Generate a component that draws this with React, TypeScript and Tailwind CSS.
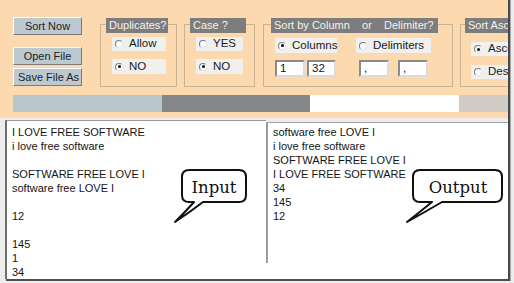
import React from 'react';

const inputLines = [
  'I LOVE FREE SOFTWARE',
  'i love free software',
  '',
  'SOFTWARE FREE LOVE I',
  'software free LOVE I',
  '',
  '12',
  '',
  '145',
  '1',
  '34',
];

const outputLines = [
  'software free LOVE I',
  'i love free software',
  'SOFTWARE FREE LOVE I',
  'I LOVE FREE SOFTWARE',
  '34',
  '145',
  '12',
];

function Radio({ checked }: { checked?: boolean }) {
  return (
    <span className="flex h-[8px] w-[8px] shrink-0 items-center justify-center rounded-full border border-t-[#7c7c7c] border-l-[#7c7c7c] border-r-[#e4e4e4] border-b-[#e4e4e4] bg-white">
      {checked && <span className="h-[3px] w-[3px] rounded-full bg-black" />}
    </span>
  );
}

function Option({ label, checked, className }: { label: string; checked?: boolean; className: string }) {
  return (
    <div className={`flex shrink-0 items-center bg-[#f0f0ef] pl-[3px] text-[11.5px] leading-none text-[#1a1a1a] ${className}`}>
      <Radio checked={checked} />
      <span className="ml-[6px]">{label}</span>
    </div>
  );
}

function Title({ children, className }: { children: React.ReactNode; className: string }) {
  return (
    <div className={`-mt-[7px] h-[15px] shrink-0 overflow-hidden whitespace-pre bg-[#7d7d7d] pl-[3px] text-[11px] leading-[15px] text-[#f2f2f2] ${className}`}>
      {children}
    </div>
  );
}

function Btn({ label, className }: { label: string; className: string }) {
  return (
    <div className={`flex w-[69px] items-center justify-center overflow-hidden whitespace-nowrap border border-t-white border-l-white border-r-[#7b7b7b] border-b-[#7b7b7b] bg-[#bdc9d1] text-[11px] text-[#1e1e1e] ${className}`}>
      {label}
    </div>
  );
}

function Field({ value, className }: { value: string; className: string }) {
  return (
    <div className={`flex h-[17px] shrink-0 items-end border-2 border-t-[#8a8a8a] border-l-[#8a8a8a] border-r-[#dcdcdc] border-b-[#dcdcdc] bg-white pl-[3px] text-[11.5px] leading-[14px] text-[#111] ${className}`}>
      {value}
    </div>
  );
}

export default function App() {
  return (
    <div className="relative h-[283px] w-[514px] overflow-hidden bg-[#ededed] font-['Liberation_Sans',Arial,sans-serif]">
      <div className="flex h-[281px]">
        <div className="flex w-[508px] flex-col">
          {/* toolbar */}
          <div className="flex h-[118px] shrink-0 flex-col overflow-hidden bg-[#fdd9b0]">
            <div className="flex h-[95px] shrink-0 items-start">
              <div className="ml-[13px] flex shrink-0 flex-col pt-[17px]">
                <Btn label="Sort Now" className="h-[18px]" />
                <Btn label="Open File" className="mt-[12px] h-[18px]" />
                <Btn label="Save File As" className="mt-[3px] h-[18px] pl-[2px]" />
              </div>

              <div className="ml-[18px] mt-[24px] flex h-[63px] w-[77px] shrink-0 flex-col border border-[#c9b496]">
                <Title className="ml-[5px] w-[62px]">Duplicates?</Title>
                <Option label="Allow" className="ml-[11px] mt-[4px] h-[14px] w-[54px]" />
                <Option label="NO" checked className="ml-[11px] mt-[8px] h-[15px] w-[54px]" />
              </div>

              <div className="ml-[7px] mt-[24px] flex h-[63px] w-[71px] shrink-0 flex-col border border-[#c9b496]">
                <Title className="ml-[5px] w-[56px]">Case ?</Title>
                <Option label="YES" className="ml-[11px] mt-[4px] h-[14px] w-[47px]" />
                <Option label="NO" checked className="ml-[11px] mt-[8px] h-[15px] w-[47px]" />
              </div>

              <div className="ml-[8px] mt-[24px] flex h-[63px] w-[190px] shrink-0 flex-col border border-[#c9b496]">
                <Title className="ml-[7px] w-[167px]">{'Sort by Column    or    Delimiter?'}</Title>
                <div className="mt-[5px] flex">
                  <Option label="Columns" checked className="ml-[11px] h-[15px] w-[62px]" />
                  <Option label="Delimiters" className="ml-[19px] h-[15px] w-[75px]" />
                </div>
                <div className="mt-[7px] flex">
                  <Field value="1" className="ml-[11px] w-[30px]" />
                  <Field value="32" className="ml-[2px] w-[29px]" />
                  <Field value="," className="ml-[23px] w-[30px]" />
                  <Field value="," className="ml-[9px] w-[30px]" />
                </div>
              </div>

              <div className="ml-[7px] mt-[24px] flex h-[63px] w-[100px] shrink-0 flex-col border border-[#c9b496]">
                <Title className="ml-[4px] w-[90px]">Sort Ascending?</Title>
                <Option label="Ascending" checked className="ml-[10px] mt-[9px] h-[14px] w-[80px]" />
                <Option label="Descending" className="ml-[10px] mt-[9px] h-[14px] w-[80px]" />
              </div>
            </div>

            <div className="ml-[13px] flex h-[17px] shrink-0">
              <div className="w-[149px] bg-[#b9c5cd]" />
              <div className="w-[148px] bg-[#858789]" />
              <div className="w-[149px] bg-white" />
              <div className="w-[49px] bg-[#d2ccc6]" />
            </div>
          </div>

          {/* text panes */}
          <div className="flex h-[161px] shrink-0 items-start">
            <div className="ml-[5px] mt-[2px] h-[159px] w-[261px] shrink-0 border-l-2 border-t border-l-[#6e6e6e] border-t-[#9a9a9a] bg-white pl-[5px] pt-[4px] text-[11px] leading-[14px] text-[#141414]">
              {inputLines.map((l, i) => (
                <div key={i} className="h-[14px] whitespace-pre">{l}</div>
              ))}
            </div>
            <div className="mt-[4px] flex h-[157px] flex-1 border-t border-[#a4a4a4] bg-white">
              <div className="h-[140px] w-[2px] shrink-0 bg-[#9c9c9c]" />
              <div className="pl-[5px] pt-[2px] text-[11px] leading-[14px] text-[#141414]">
                {outputLines.map((l, i) => (
                  <div key={i} className="h-[14px] whitespace-pre">{l}</div>
                ))}
              </div>
            </div>
          </div>
          <div className="ml-[6px] h-[2px] shrink-0 bg-[#4e4e4e]" />
        </div>
        <div className="w-[2px] shrink-0 bg-[#4a4a4a]" />
        <div className="w-[1px] shrink-0 bg-[#a8a8a8]" />
      </div>

      {/* callouts */}
      <svg className="pointer-events-none absolute left-0 top-0" width="514" height="283" viewBox="0 0 514 283">
        <path
          d="M189 170 H239 Q246 170 246 177 V195 Q246 202 239 202 H203 Q190 212 175 222 Q186 211 194 202 H189 Q182 202 182 195 V177 Q182 170 189 170 Z"
          fill="white"
          stroke="#111"
          strokeWidth="2"
          strokeLinejoin="round"
        />
        <text x="214" y="193" textAnchor="middle" fontFamily="'DejaVu Serif', serif" fontSize="16.5" fill="#111">
          Input
        </text>
        <path
          d="M420 170 H495 Q502 170 502 177 V195 Q502 202 495 202 H442 Q425 212 407 222 Q421 211 432 202 H420 Q413 202 413 195 V177 Q413 170 420 170 Z"
          fill="white"
          stroke="#111"
          strokeWidth="2"
          strokeLinejoin="round"
        />
        <text x="458" y="193" textAnchor="middle" fontFamily="'DejaVu Serif', serif" fontSize="16.5" fill="#111">
          Output
        </text>
      </svg>
    </div>
  );
}
